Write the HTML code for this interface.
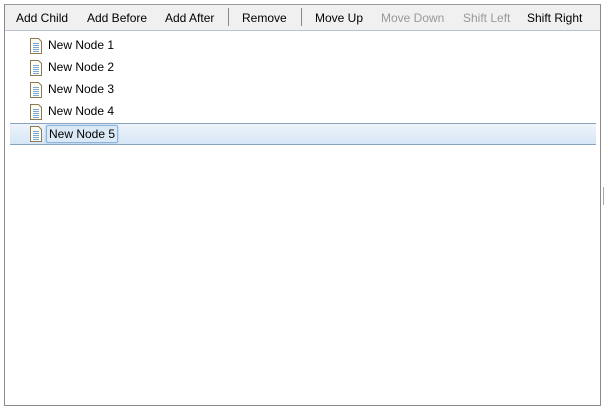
<!DOCTYPE html>
<html><head><style>
body{margin:0;width:606px;height:410px;background:#fff;font-family:"Liberation Sans",sans-serif;font-size:12px;position:relative;overflow:hidden}
.box{position:absolute;left:4px;top:4px;width:595px;height:400px;border:1px solid #8a8a8a;border-top-color:#999}
.tb{position:absolute;left:0;top:0;width:595px;height:25px;background:#f0f0f0;border-bottom:1px solid #b8c2cc}
.b{position:absolute;top:6px;color:#000;white-space:nowrap}
.d{color:#999}
.sep{position:absolute;top:3px;width:1px;height:18px;background:#888}
.row{position:absolute;left:5px;width:586px;height:21px}
.row .t{position:absolute;left:38px;top:3px}
.sel{background:linear-gradient(#eef4fb,#d6e6f6);border-top:1px solid #8aa4bd;border-bottom:1px solid #8aa4bd;height:20px}
.sel .t{left:36px;top:1px;padding:1px 2px;border:1px solid #8db3d9;border-radius:2px;box-shadow:0 0 2px #9cc0e6;background:#dbe9f7}
.ic{position:absolute;left:19px;top:3px}
</style></head><body>
<div class="box">
<div class="tb">
<span class="b" style="left:11px">Add Child</span>
<span class="b" style="left:82px">Add Before</span>
<span class="b" style="left:160px">Add After</span>
<div class="sep" style="left:223px"></div>
<span class="b" style="left:237px">Remove</span>
<div class="sep" style="left:296px"></div>
<span class="b" style="left:310px">Move Up</span>
<span class="b d" style="left:376px">Move Down</span>
<span class="b d" style="left:458px">Shift Left</span>
<span class="b" style="left:522px">Shift Right</span>
</div>
<div class="row" style="top:30px"><svg class="ic" width="14" height="16"><path d="M1.5 .5h8l3 3v12h-11z" fill="#fdfbf2" stroke="#8a7a55"/><path d="M4 5.5h6M4 7.5h6M4 9.5h6M4 11.5h6M4 13.5h6" stroke="#4a8fd4" stroke-width=".8"/></svg><span class="t">New Node 1</span></div>
<div class="row" style="top:52px"><svg class="ic" width="14" height="16"><path d="M1.5 .5h8l3 3v12h-11z" fill="#fdfbf2" stroke="#8a7a55"/><path d="M4 5.5h6M4 7.5h6M4 9.5h6M4 11.5h6M4 13.5h6" stroke="#4a8fd4" stroke-width=".8"/></svg><span class="t">New Node 2</span></div>
<div class="row" style="top:74px"><svg class="ic" width="14" height="16"><path d="M1.5 .5h8l3 3v12h-11z" fill="#fdfbf2" stroke="#8a7a55"/><path d="M4 5.5h6M4 7.5h6M4 9.5h6M4 11.5h6M4 13.5h6" stroke="#4a8fd4" stroke-width=".8"/></svg><span class="t">New Node 3</span></div>
<div class="row" style="top:96px"><svg class="ic" width="14" height="16"><path d="M1.5 .5h8l3 3v12h-11z" fill="#fdfbf2" stroke="#8a7a55"/><path d="M4 5.5h6M4 7.5h6M4 9.5h6M4 11.5h6M4 13.5h6" stroke="#4a8fd4" stroke-width=".8"/></svg><span class="t">New Node 4</span></div>
<div class="row sel" style="top:118px"><svg class="ic" style="top:2px" width="14" height="16"><path d="M1.5 .5h8l3 3v12h-11z" fill="#fdfbf2" stroke="#8a7a55"/><path d="M4 5.5h6M4 7.5h6M4 9.5h6M4 11.5h6M4 13.5h6" stroke="#4a8fd4" stroke-width=".8"/></svg><span class="t">New Node 5</span></div>
</div>
<div style="position:absolute;left:603px;top:187px;width:1px;height:18px;background:#aaa"></div>
</body></html>
